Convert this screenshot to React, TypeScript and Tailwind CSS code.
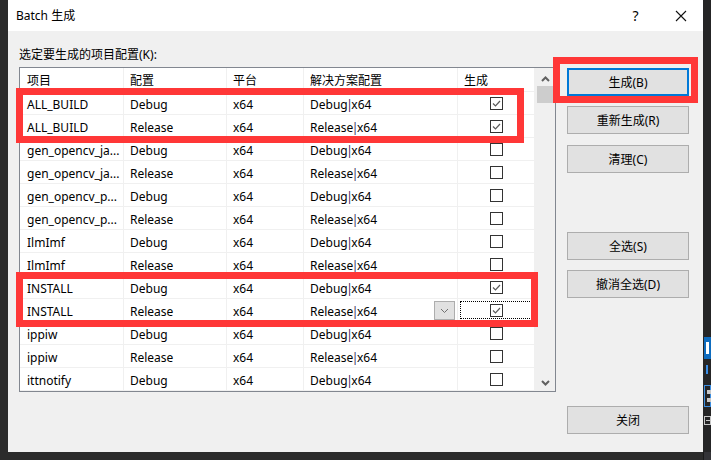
import type React from 'react'

type Row = {
  name: string
  config: string
  checked: boolean
  focus?: boolean
}

const rows: Row[] = [
  { name: 'ALL_BUILD', config: 'Debug', checked: true },
  { name: 'ALL_BUILD', config: 'Release', checked: true },
  { name: 'gen_opencv_ja...', config: 'Debug', checked: false },
  { name: 'gen_opencv_ja...', config: 'Release', checked: false },
  { name: 'gen_opencv_p...', config: 'Debug', checked: false },
  { name: 'gen_opencv_p...', config: 'Release', checked: false },
  { name: 'IlmImf', config: 'Debug', checked: false },
  { name: 'IlmImf', config: 'Release', checked: false },
  { name: 'INSTALL', config: 'Debug', checked: true },
  { name: 'INSTALL', config: 'Release', checked: true, focus: true },
  { name: 'ippiw', config: 'Debug', checked: false },
  { name: 'ippiw', config: 'Release', checked: false },
  { name: 'ittnotify', config: 'Debug', checked: false },
]

const FONT = '"Noto Sans", "Noto Sans CJK SC", sans-serif'

function CheckBox({ checked }: { checked: boolean }) {
  return (
    <div className="w-[13px] h-[13px] border border-[#333333] bg-white flex items-center justify-center">
      {checked && (
        <svg width="11" height="11" viewBox="0 0 11 11">
          <polyline points="2,5.5 4.5,8 9,3" fill="none" stroke="#5a5a5a" strokeWidth="1.2" />
        </svg>
      )}
    </div>
  )
}

function Chevron({ up, color = '#606060', w = 2 }: { up?: boolean; color?: string; w?: number }) {
  return (
    <svg width="9" height="6" viewBox="0 0 9 6">
      <polyline
        points={up ? '1,5 4.5,1.5 8,5' : '1,1 4.5,4.5 8,1'}
        fill="none"
        stroke={color}
        strokeWidth={w}
      />
    </svg>
  )
}

function DlgButton({ children, isDefault, className }: { children: React.ReactNode; isDefault?: boolean; className?: string }) {
  return (
    <div
      className={`h-[28px] w-[122px] flex items-center justify-center bg-[#e1e1e1] text-[12px] text-black pt-[1px] ${
        isDefault ? 'border-2 border-[#0078d7]' : 'border border-[#adadad]'
      } ${className ?? ''}`}
    >
      {children}
    </div>
  )
}

function Cell({ w, children, className }: { w: string; children?: React.ReactNode; className?: string }) {
  return (
    <div
      className={`${w} h-full shrink-0 border-r border-[#f0f0f0] pl-[6px] pt-[3px] flex items-center whitespace-nowrap overflow-hidden ${
        className ?? ''
      }`}
    >
      {children}
    </div>
  )
}

export default function App() {
  return (
    <div className="relative w-[711px] h-[460px] overflow-hidden bg-[#2b2b2b] flex flex-col text-black" style={{ fontFamily: FONT }}>
      <div className="flex h-[452px]">
        <div className="w-[8px] shrink-0 bg-[#2b2b2b]" />

        {/* dialog */}
        <div className="w-[695px] shrink-0 flex flex-col bg-[#f0f0f0]">
          <div className="h-[31px] bg-white flex items-center">
            <span className="pl-[8px] text-[12px]">Batch 生成</span>
            <div className="ml-auto flex h-full">
              <div className="w-[45px] flex items-center justify-center text-[14px]">?</div>
              <div className="w-[45px] flex items-center justify-center">
                <svg width="12" height="12" viewBox="0 0 12 12">
                  <path d="M1 1 L11 11 M11 1 L1 11" stroke="#111" strokeWidth="1.1" />
                </svg>
              </div>
            </div>
          </div>

          <div className="flex flex-1">
            <div className="pl-[11px] flex flex-col">
              <div className="h-[36px] pt-[15px] text-[12px] leading-[18px]">选定要生成的项目配置(K):</div>

              <div className="w-[537px] h-[325px] border border-[#828790] bg-white flex">
                <div className="w-[515px] flex flex-col text-[12px]">
                  <div className="h-[24px] flex border-b border-[#f0f0f0]">
                    <Cell w="w-[104px]" className="pl-[7px] border-[#e5e5e5]">项目</Cell>
                    <Cell w="w-[103px]" className="border-[#e5e5e5]">配置</Cell>
                    <Cell w="w-[77px]" className="pl-[5px] border-[#e5e5e5]">平台</Cell>
                    <Cell w="w-[154px]" className="border-[#e5e5e5]">解决方案配置</Cell>
                    <Cell w="w-[77px]" className="border-[#e5e5e5]">生成</Cell>
                  </div>
                  {rows.map((r, i) => (
                    <div key={i} className="h-[23px] flex border-b border-[#f0f0f0]">
                      <Cell w="w-[104px]" className="pl-[7px]">{r.name}</Cell>
                      <Cell w="w-[103px]">{r.config}</Cell>
                      <Cell w="w-[77px]">x64</Cell>
                      <Cell w="w-[154px]" className="pr-[2px] relative">
                        <span>
                          {r.config}
                          <span className="mx-[-1.5px] text-[#3a1a5a]">|</span>
                          x64
                        </span>
                        {r.focus && (
                          <div className="absolute right-[2px] top-[2px] w-[21px] h-[19px] border border-[#adadad] bg-[#e1e1e1] flex items-center justify-center">
                            <Chevron color="#707070" w={1} />
                          </div>
                        )}
                      </Cell>
                      <div className="w-[77px] h-full shrink-0 border-r border-[#f0f0f0] flex items-center justify-center p-[2px]">
                        <div
                          className={`w-full h-full flex items-center justify-center ${
                            r.focus ? 'border border-dotted border-black' : ''
                          }`}
                        >
                          <CheckBox checked={r.checked} />
                        </div>
                      </div>
                    </div>
                  ))}
                </div>

                {/* scrollbar */}
                <div className="flex-1 bg-[#f0f0f0] flex flex-col items-center pt-[8px]">
                  <Chevron up />
                  <div className="mt-[4px] w-[16px] h-[17px] bg-[#cdcdcd]" />
                  <div className="mt-auto mb-[5px]">
                    <Chevron />
                  </div>
                </div>
              </div>
            </div>

            <div className="ml-[11px] flex flex-col">
              <DlgButton isDefault className="mt-[37px]">生成(B)</DlgButton>
              <DlgButton className="mt-[10px]">重新生成(R)</DlgButton>
              <DlgButton className="mt-[11px]">清理(C)</DlgButton>
              <DlgButton className="mt-[59px]">全选(S)</DlgButton>
              <DlgButton className="mt-[10px]">撤消全选(D)</DlgButton>
              <DlgButton className="mt-[108px]">关闭</DlgButton>
            </div>
          </div>
        </div>

        {/* editor edge on the right */}
        <div className="w-[8px] shrink-0 bg-[#252526] flex flex-col">
          <div className="mt-[337px] h-[22px] ml-[1px] bg-[#0e6cbf] flex items-center pl-[2px]">
            <div className="w-[3px] h-[12px] bg-white" />
          </div>
          <div className="mt-[6px] ml-[3px] w-[2px] h-[9px] bg-[#3a8ee6]" />
          <div className="mt-[11px] ml-[1px] h-[22px] border border-[#3d8ee0] flex flex-col justify-center gap-[4px] pl-[2px]">
            <div className="w-[4px] h-[4px] bg-[#c8c8c8]" />
            <div className="w-[4px] h-[4px] bg-[#c8c8c8]" />
          </div>
          <div className="mt-[9px] ml-[1px] w-[7px] h-[9px] border border-[#c8c8c8] flex items-center">
            <div className="w-[4px] h-[1px] bg-[#c8c8c8] ml-[1px]" />
          </div>
        </div>
      </div>

      <div className="flex h-[8px]">
        <div className="w-[703px] bg-[#2b2b2b]" />
        <div className="w-[1px] bg-[#1a1a1a]" />
        <div className="flex-1 bg-[#333337]" />
      </div>

      {/* red annotation boxes */}
      <div className="absolute left-[16px] top-[88px] w-[508px] h-[55px] border-[7px] border-[#ff3737]" />
      <div className="absolute left-[16px] top-[272px] w-[522px] h-[55px] border-[7px] border-[#ff3737]" />
      <div className="absolute left-[553px] top-[57px] w-[145px] h-[46px] border-[7px] border-[#ff3737]" />
    </div>
  )
}
